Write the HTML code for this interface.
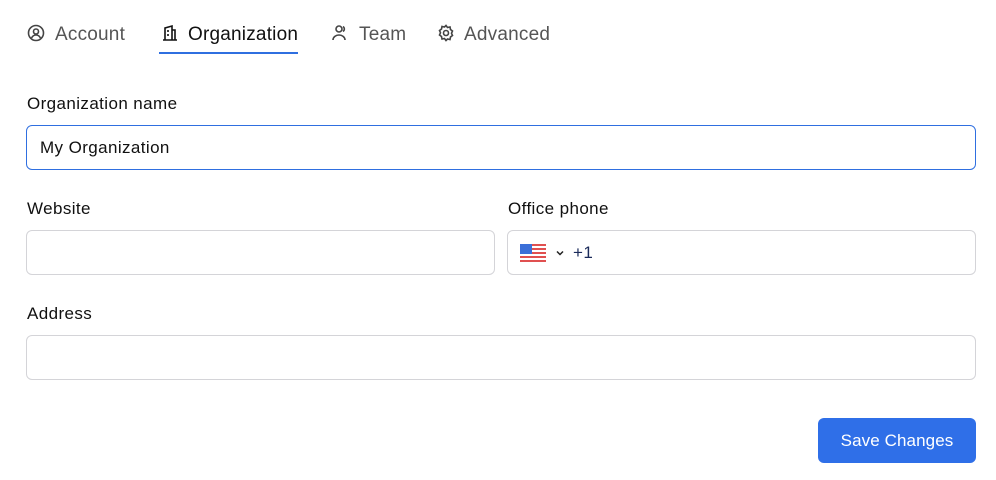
<!DOCTYPE html>
<html><head><style>
*{box-sizing:border-box;margin:0;padding:0}
body{width:996px;height:480px;background:#fff;font-family:"Liberation Sans",sans-serif;color:#111;position:relative;overflow:hidden}
.tab{position:absolute;top:24px;font-size:19px;color:#555;height:22px;line-height:22px;letter-spacing:0.2px}
.ic{position:absolute;top:24px;width:18px;height:18px}
.act{color:#111}
.ul{position:absolute;left:159px;top:52px;width:139px;height:2px;background:#2f6fe0}
.lbl{position:absolute;font-size:17px;color:#111;letter-spacing:0.4px}
.inp{position:absolute;border:1px solid #d4d4d8;border-radius:6px;height:45px;font-size:17px;padding-left:13px;display:flex;align-items:center;letter-spacing:0.4px}
.btn{position:absolute;left:818px;top:418px;width:158px;height:45px;background:#2f6fe8;border-radius:6px;color:#fff;font-size:17px;display:flex;align-items:center;justify-content:center;letter-spacing:0.1px}
</style></head><body>
<svg class="ic" style="left:27px" viewBox="0 0 18 18" fill="none" stroke="#444" stroke-width="1.6"><circle cx="9" cy="9" r="7.5"/><circle cx="9" cy="7.5" r="2.5"/><path d="M4.5 14c1-2 2.5-3 4.5-3s3.5 1 4.5 3"/></svg>
<div class="tab" style="left:55px">Account</div>
<svg class="ic" style="left:161px" viewBox="0 0 18 18" fill="none" stroke="#111" stroke-width="1.6"><path d="M2 16h14M4 16V4l7-2v14M11 6h3v10M7 6v2M7 10v2"/></svg>
<div class="tab act" style="left:188px">Organization</div>
<div class="ul"></div>
<svg class="ic" style="left:331px" viewBox="0 0 18 18" fill="none" stroke="#444" stroke-width="1.6"><circle cx="8" cy="5" r="3"/><path d="M2 16c0-3 3-5 6-5s6 2 6 5M12 2.5a3 3 0 010 5"/></svg>
<div class="tab" style="left:359px">Team</div>
<svg class="ic" style="left:437px" viewBox="0 0 18 18" fill="none" stroke="#444" stroke-width="1.6"><circle cx="9" cy="9" r="2.5"/><path d="M9 1.5l1.5 2 2.5-.5.5 2.5 2 1.5-1 2.3 1 2.2-2 1.5-.5 2.5-2.5-.5L9 16.5l-1.5-2-2.5.5-.5-2.5-2-1.5 1-2.2-1-2.3 2-1.5.5-2.5 2.5.5z"/></svg>
<div class="tab" style="left:464px">Advanced</div>
<div class="lbl" style="left:27px;top:94px">Organization name</div>
<div class="inp" style="left:26px;top:125px;width:950px;border-color:#2f6fe0">My Organization</div>
<div class="lbl" style="left:27px;top:199px">Website</div>
<div class="inp" style="left:26px;top:230px;width:469px"></div>
<div class="lbl" style="left:508px;top:199px">Office phone</div>
<div class="inp" style="left:507px;top:230px;width:469px;padding-left:12px">
<svg width="26" height="18" viewBox="0 0 26 18"><rect width="26" height="18" fill="#fff"/><g fill="#e05050"><rect y="0" width="26" height="2"/><rect y="4" width="26" height="2"/><rect y="8" width="26" height="2"/><rect y="12" width="26" height="2"/><rect y="16" width="26" height="2"/></g><rect width="12" height="10" fill="#3b6fd8"/></svg>
<svg width="10" height="8" viewBox="0 0 10 8" style="margin-left:9px" fill="none" stroke="#222" stroke-width="1.5"><path d="M2 2.5l3 3 3-3"/></svg>
<span style="margin-left:8px;color:#1a2a5a">+1</span></div>
<div class="lbl" style="left:27px;top:304px">Address</div>
<div class="inp" style="left:26px;top:335px;width:950px"></div>
<div class="btn">Save Changes</div>
</body></html>
